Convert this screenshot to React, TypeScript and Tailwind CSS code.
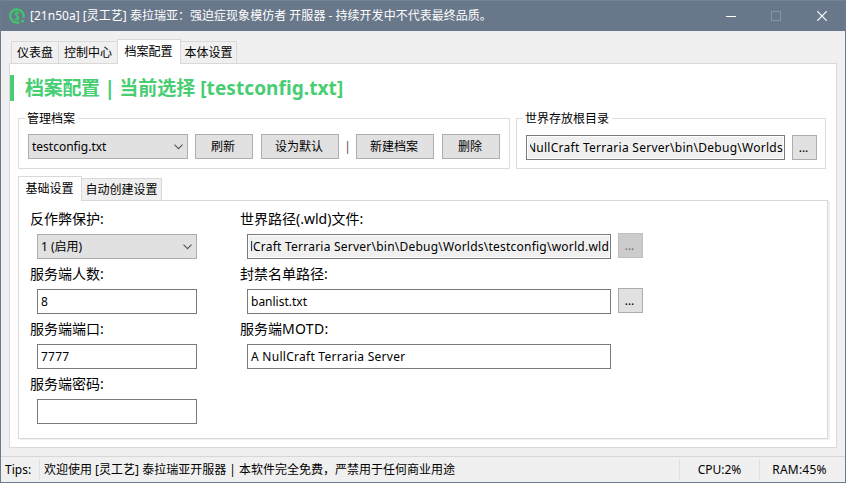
import type { ReactNode } from "react";
import clsx from "clsx";

function Tab({ active, className, children }: { active?: boolean; className?: string; children: ReactNode }) {
  return (
    <div
      className={clsx(
        "flex shrink-0 items-center justify-center whitespace-nowrap border border-b-0 border-[#d9d9d9]",
        active ? "relative z-10 bg-white pb-px pr-px" : "h-[22px] bg-[#f0f0f0]",
        className,
      )}
    >
      {children}
    </div>
  );
}

function Button({ className, disabled, children }: { className?: string; disabled?: boolean; children: ReactNode }) {
  return (
    <button
      className={clsx(
        "flex h-[25px] shrink-0 items-center justify-center whitespace-nowrap border pr-0.5",
        disabled ? "border-[#bfbfbf] bg-[#cccccc] text-[#6d6d6d]" : "border-[#adadad] bg-[#e1e1e1]",
        className,
      )}
    >
      {children}
    </button>
  );
}

function Combo({ children, className }: { children: ReactNode; className?: string }) {
  return (
    <div
      className={clsx(
        "flex h-[25px] w-40 shrink-0 items-center justify-between border border-[#adadad] bg-[#e1e1e1] pl-[3px] pr-1",
        className,
      )}
    >
      <span>{children}</span>
      <svg width="9" height="6" viewBox="0 0 9 6" fill="none" stroke="#555" strokeWidth="1.1">
        <path d="M0.5 0.7 4.5 4.7 8.5 0.7" />
      </svg>
    </div>
  );
}

function Field({ className, readOnly, children }: { className?: string; readOnly?: boolean; children?: ReactNode }) {
  return (
    <div className={clsx("flex h-[25px] shrink-0 border border-[#7a7a7a] bg-white p-px", readOnly && "pl-[3px]", className)}>
      <div
        className={clsx(
          "flex min-w-0 flex-1 items-center overflow-hidden whitespace-nowrap",
          readOnly ? "justify-end bg-[#f0f0f0] shadow-[-2px_0_0_#f0f0f0]" : "pl-[2px]",
        )}
      >
        {children}
      </div>
    </div>
  );
}

function Group({ title, className, legendClass, children }: { title: string; className?: string; legendClass: string; children: ReactNode }) {
  return (
    <section className={clsx("flex h-[51px] shrink-0 flex-col border border-[#dcdcdc]", className)}>
      <h2 className={clsx("-mt-[9px] ml-[6px] h-[18px] whitespace-nowrap bg-white pl-[2px] leading-[18px]", legendClass)}>
        {title}
      </h2>
      {children}
    </section>
  );
}

function Label({ children }: { children: ReactNode }) {
  return <div className="h-[30px] whitespace-nowrap text-sm leading-[30px]">{children}</div>;
}

function Logo() {
  return (
    <svg width="16" height="16" viewBox="0 0 16 16" fill="none" stroke="#3fc66d">
      <path d="M10.4 14.2A6.7 6.7 0 1 1 14.4 9.7" strokeWidth="2.3" />
      <circle cx="13.4" cy="13.2" r="1.4" fill="#3fc66d" stroke="none" />
      <path d="M10.3 5.2C9.2 3.8 6 4 6 6c0 2 4 1.700 4 3.900 0 2-3.100 2.200-4.400.8M8 3.200v9.200" strokeWidth="1.300" />
    </svg>
  );
}

export default function App() {
  return (
    <div className="flex h-[483px] w-[846px] flex-col overflow-hidden border border-t-0 border-[#6b7a8e] bg-[#f0f0f0] font-['Noto_Sans','Noto_Sans_CJK_SC',sans-serif] text-xs text-black">
      <header className="flex h-[31px] shrink-0 items-center border-t border-[#728494] bg-[#69778a] pl-2 text-white">
        <Logo />
        <span className="ml-[5px] whitespace-nowrap tracking-[0.02px]">[21n50a] [灵工艺] 泰拉瑞亚：强迫症现象模仿者 开服器 - 持续开发中不代表最终品质。</span>
        <div className="ml-auto flex items-center pr-[18px]">
          <div className="h-px w-[10px] bg-white" />
          <div className="ml-[35px] size-[10px] border border-[#8395a2]" />
          <svg className="ml-9" width="10" height="10" viewBox="0 0 10 10" stroke="#fff" strokeWidth="1.2">
            <path d="M0.3 0.3 9.7 9.7M9.7 0.3 0.3 9.7" />
          </svg>
        </div>
      </header>

      <nav className="flex h-8 shrink-0 items-end pl-[10px]">
        <Tab className="w-[47px] border-r-0">仪表盘</Tab>
        <Tab className="w-[59px] border-r-0">控制中心</Tab>
        <Tab active className="-mb-px h-[25px] w-16">档案配置</Tab>
        <Tab className="w-14 border-l-0">本体设置</Tab>
      </nav>

      <main className="ml-2 flex h-[385px] w-[828px] shrink-0 flex-col border border-[#d9d9d9] bg-white">
        <div className="mt-[11px] flex h-[26px] items-center">
          <div className="h-full w-1 bg-[#47cd72]" />
          <h1 className="ml-[11px] whitespace-nowrap text-[19px] font-bold leading-[26px] text-[#47cd72]">
            <span className="tracking-[-0.3px]">档案配置 | </span>
            <span>当前选择 </span>
            <span className="tracking-[0.08px]">[testconfig.txt]</span>
          </h1>
        </div>

        <div className="mt-[17px] flex gap-[6px] pl-2">
          <Group title="管理档案" className="w-[492px]" legendClass="w-[53px]">
            <div className="mt-[6px] flex items-center pl-[9px]">
              <Combo>testconfig.txt</Combo>
              <Button className="ml-[7px] w-[58px]">刷新</Button>
              <Button className="ml-2 w-[78px]">设为默认</Button>
              <span className="w-[17px] text-center text-[#5e4a3c]">|</span>
              <Button className="w-[78px]">新建档案</Button>
              <Button className="ml-2 w-[58px]">删除</Button>
            </div>
          </Group>
          <Group title="世界存放根目录" className="w-[310px]" legendClass="w-[89px]">
            <div className="mt-[7px] flex pl-[9px]">
              <Field readOnly className="w-[259px] tracking-[0.27px]">NullCraft Terraria Server\bin\Debug\Worlds</Field>
              <Button className="ml-[7px] w-[25px]">...</Button>
            </div>
          </Group>
        </div>

        <nav className="mt-[7px] flex h-6 shrink-0 items-end pl-2">
          <Tab active className="-mb-px h-[25px] w-16">基础设置</Tab>
          <Tab className="w-20 border-l-0">自动创建设置</Tab>
        </nav>
        <div className="ml-2 flex h-[239px] w-[810px] shrink-0 border border-[#d9d9d9] pl-[11px] pt-[3px] shadow-[2px_1px_0_#f0f0f0]">
          <div className="flex w-[210px] flex-col">
            <Label>反作弊保护:</Label>
            <Combo className="ml-[7px]">1 (启用)</Combo>
            <Label>服务端人数:</Label>
            <Field className="ml-[7px] w-40">8</Field>
            <Label>服务端端口:</Label>
            <Field className="ml-[7px] w-40 tracking-[0.2px]">7777</Field>
            <Label>服务端密码:</Label>
            <Field className="ml-[7px] w-40" />
          </div>
          <div className="flex flex-col">
            <Label>世界路径(.wld)文件:</Label>
            <div className="flex pl-[7px]">
              <Field readOnly className="w-[364px] tracking-[0.23px]">lCraft Terraria Server\bin\Debug\Worlds\testconfig\world.wld</Field>
              <Button disabled className="-mt-px ml-[7px] w-[25px]">...</Button>
            </div>
            <Label>封禁名单路径:</Label>
            <div className="flex h-[25px] pl-[7px]">
              <Field className="w-[364px]">banlist.txt</Field>
              <Button className="-mt-px ml-[7px] w-[25px]">...</Button>
            </div>
            <Label>服务端<span className="tracking-[0.3px]">MOTD:</span></Label>
            <Field className="ml-[7px] w-[364px] tracking-[0.27px]">A NullCraft Terraria Server</Field>
          </div>
        </div>
      </main>

      <footer className="mt-2 flex h-[26px] shrink-0 items-center whitespace-nowrap border-t border-[#d7d7d7]">
        <span className="w-[38px] pl-1">Tips:</span>
        <span className="flex h-5 w-[640px] items-center border-l border-[#e0e0e0] pl-1">
          欢迎使用 [灵工艺] 泰拉瑞亚开服器 | 本软件完全免费，严禁用于任何商业用途
        </span>
        <span className="flex h-5 w-20 items-center justify-center border-l border-[#e0e0e0]">CPU:2%</span>
        <span className="flex h-5 w-20 items-center justify-center border-l border-[#e0e0e0] tracking-[0.2px]">RAM:45%</span>
      </footer>
    </div>
  );
}
